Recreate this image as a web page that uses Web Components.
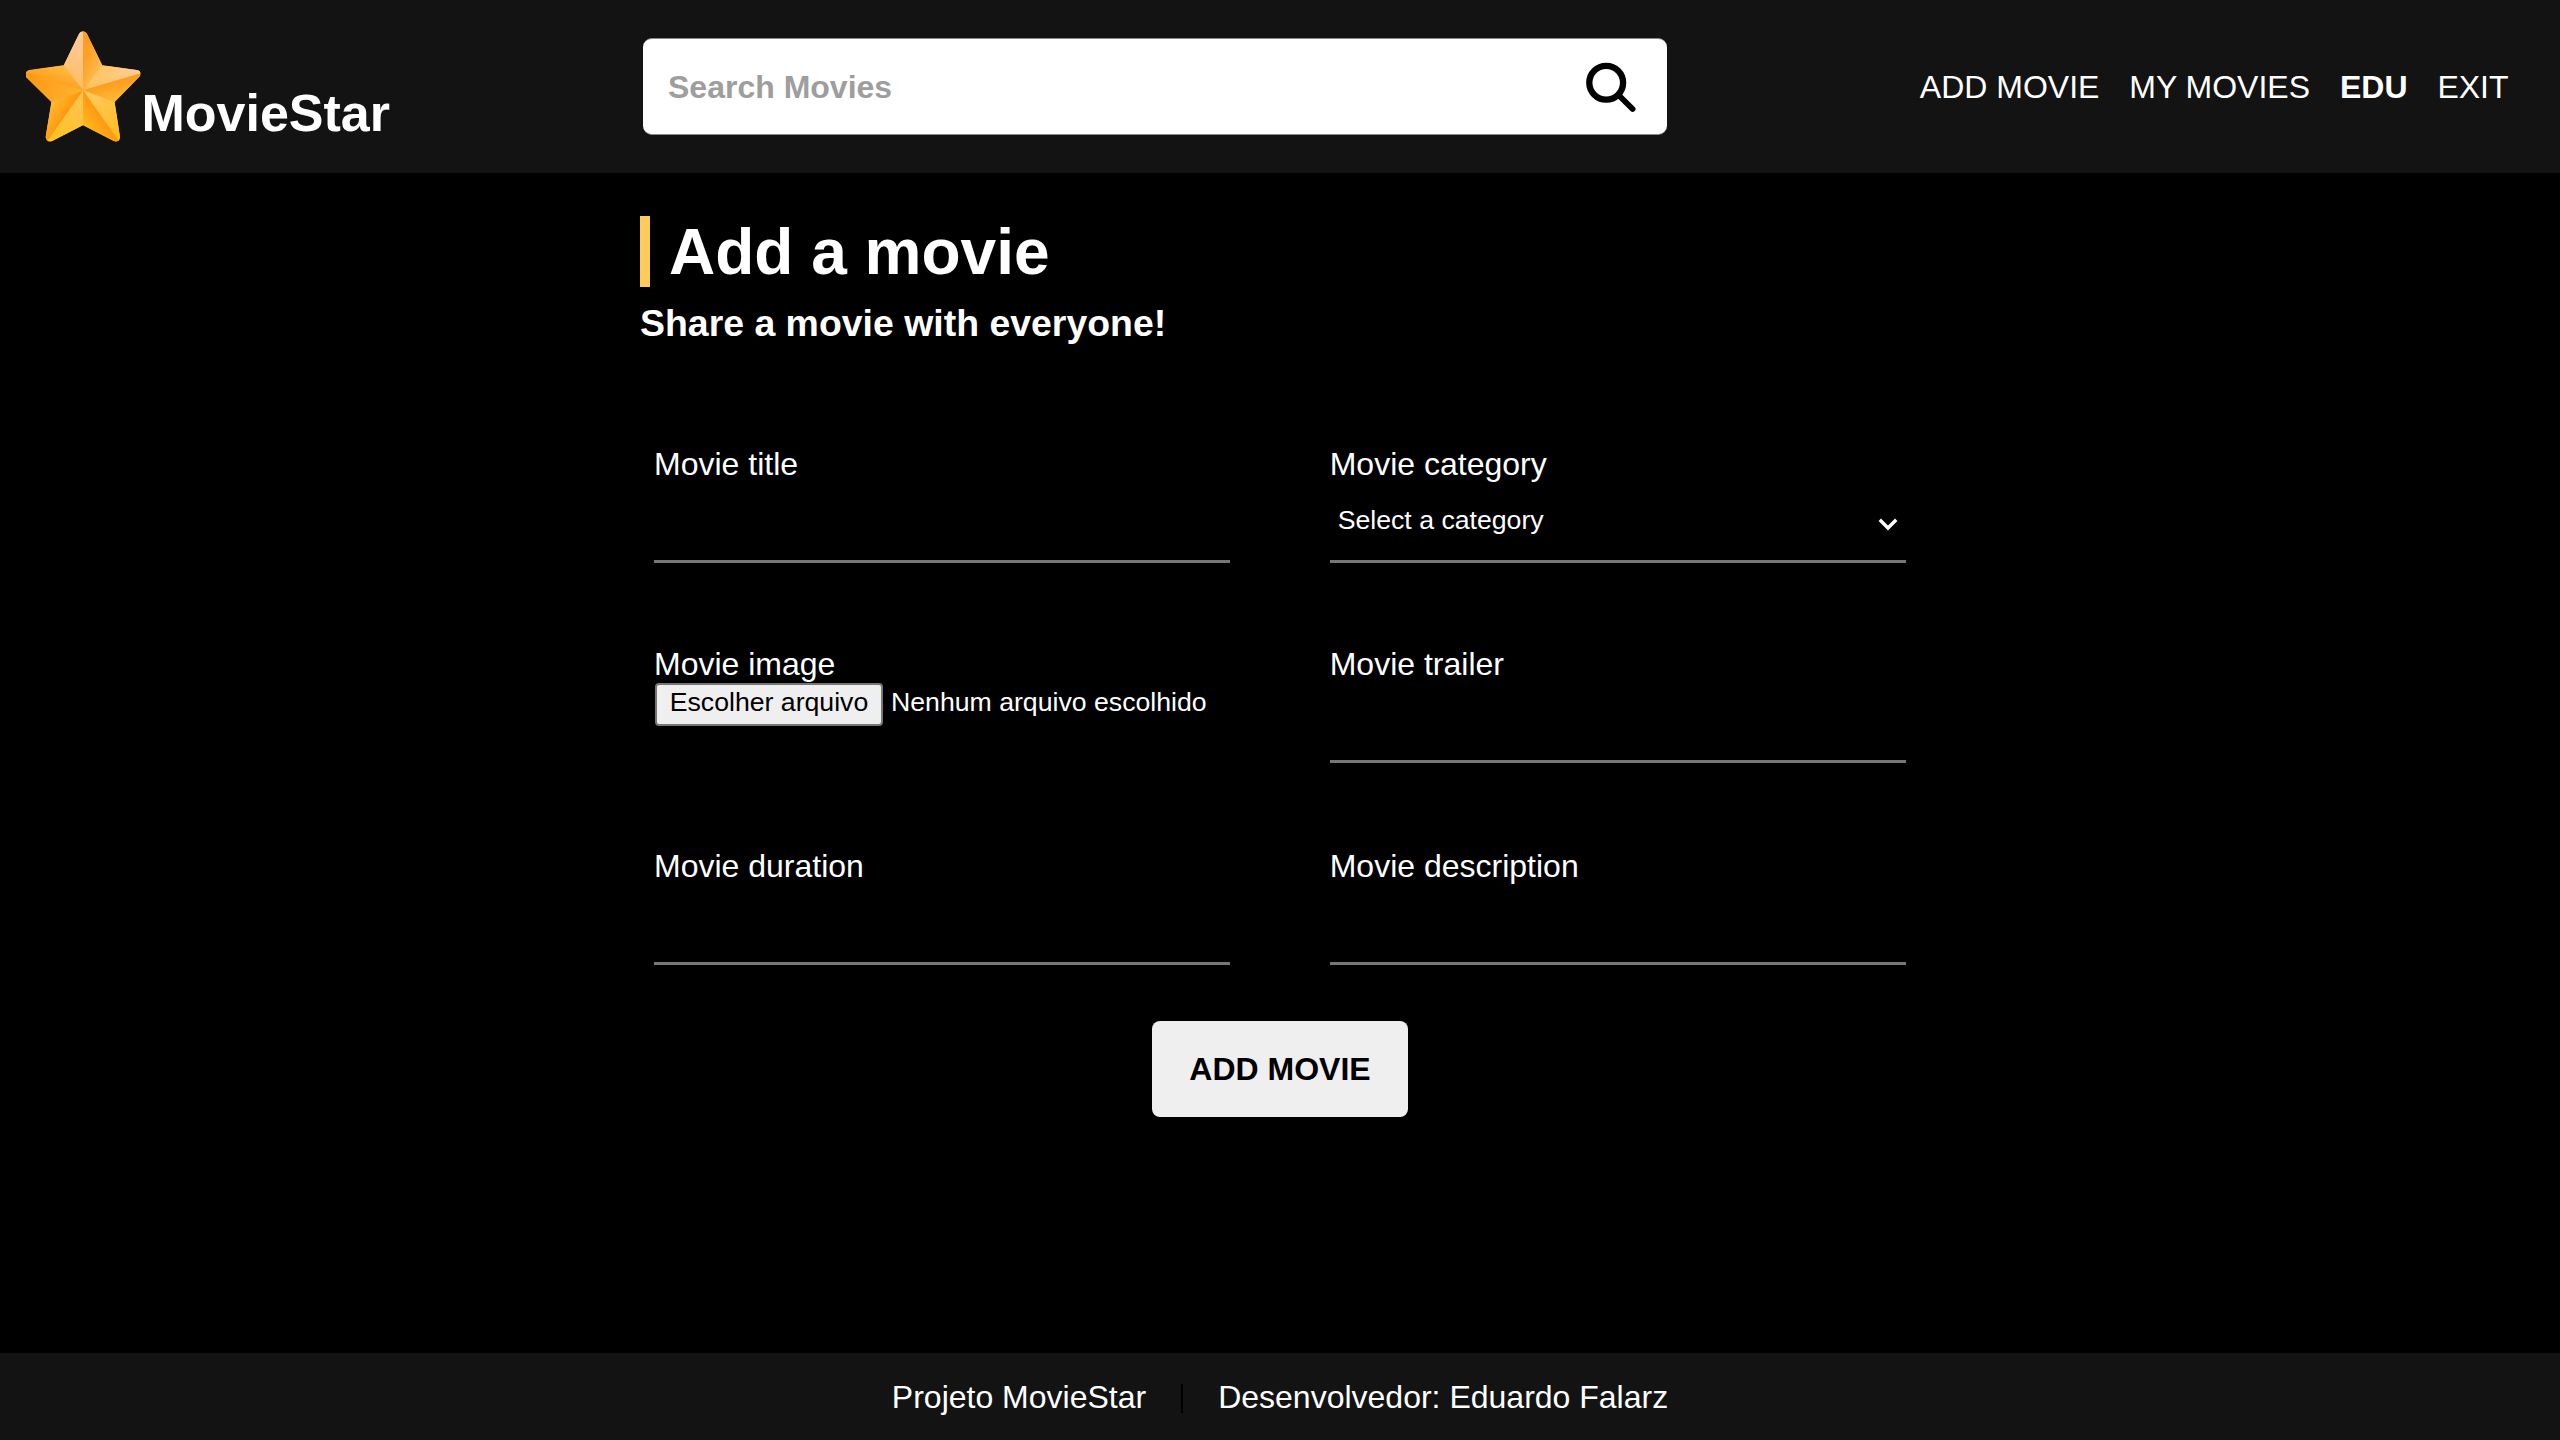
<!DOCTYPE html>
<html lang="en">
<head>
<meta charset="utf-8">
<title>MovieStar</title>
<style>
  html, body { margin: 0; background: #000; }
  body { font: 32px/36px "Liberation Sans", Arial, sans-serif; color: #fff; }
</style>
</head>
<body>
<movie-app></movie-app>
<script>
const define = (name, html) => {
  const t = document.createElement('template');
  t.innerHTML = html;
  customElements.define(name, class extends HTMLElement {
    constructor() {
      super();
      this.attachShadow({ mode: 'open' }).appendChild(t.content.cloneNode(true));
    }
  });
};

define('star-logo', `
<style>
  :host { display: flex; align-items: flex-start; height: 111px; }
  svg { display: block; width: 116px; height: 112px; flex: none; }
  span { font-weight: bold; font-size: 52px; line-height: 58px; margin: 53px 0 0 -0.5px; }
</style>
<svg viewBox="79 92 348 336">
  <defs>
    <clipPath id="s"><path d="M239 99Q250 87 261 99L308 195L411 209Q427 212 421 227L345 305L361 410Q359 427 344 423L250 375L156 423Q141 427 138 410L155 305L79 230Q74 213 89 209L192 195Z"/></clipPath>
    <linearGradient id="a" x1="0" y1="0" x2="0" y2="1"><stop offset="0" stop-color="#ffcda5"/><stop offset="1" stop-color="#ffbd60"/></linearGradient>
    <linearGradient id="b" gradientUnits="userSpaceOnUse" x1="250" y1="180" x2="300" y2="200"><stop offset="0" stop-color="#ff9d26"/><stop offset="1" stop-color="#ffbc4a"/></linearGradient>
    <linearGradient id="c" gradientUnits="userSpaceOnUse" x1="420" y1="210" x2="260" y2="260"><stop offset="0" stop-color="#ffce9c"/><stop offset=".5" stop-color="#ffc873"/><stop offset="1" stop-color="#ffc35c"/></linearGradient>
    <linearGradient id="d" gradientUnits="userSpaceOnUse" x1="335" y1="244" x2="350" y2="300"><stop offset="0" stop-color="#ff9b1e"/><stop offset="1" stop-color="#ffb932"/></linearGradient>
    <linearGradient id="e" gradientUnits="userSpaceOnUse" x1="270" y1="280" x2="355" y2="415"><stop offset="0" stop-color="#ffc95c"/><stop offset="1" stop-color="#ffbb20"/></linearGradient>
    <linearGradient id="f" gradientUnits="userSpaceOnUse" x1="304" y1="345" x2="260" y2="376"><stop offset="0" stop-color="#ff980f"/><stop offset="1" stop-color="#ffb520"/></linearGradient>
    <linearGradient id="g" gradientUnits="userSpaceOnUse" x1="250" y1="280" x2="165" y2="415"><stop offset="0" stop-color="#ffc255"/><stop offset="1" stop-color="#ffc323"/></linearGradient>
    <linearGradient id="h" gradientUnits="userSpaceOnUse" x1="198" y1="345" x2="153" y2="316"><stop offset="0" stop-color="#ff980f"/><stop offset="1" stop-color="#ffba30"/></linearGradient>
    <linearGradient id="i" gradientUnits="userSpaceOnUse" x1="95" y1="240" x2="240" y2="280"><stop offset="0" stop-color="#ff9a16"/><stop offset="1" stop-color="#ffb230"/></linearGradient>
    <linearGradient id="j" gradientUnits="userSpaceOnUse" x1="155" y1="243" x2="170" y2="200"><stop offset="0" stop-color="#ffa01f"/><stop offset="1" stop-color="#ffb83a"/></linearGradient>
  </defs>
  <g clip-path="url(#s)">
    <rect x="70" y="80" width="360" height="350" fill="#ffb02c"/>
    <path fill="url(#a)" d="M250 270V70L192 195Z"/><path fill="url(#b)" d="M250 270V70L308 195Z"/>
    <path fill="url(#c)" d="M250 270L308 195L440 205V214Z"/><path fill="url(#d)" d="M250 270L440 214L345 305Z"/>
    <path fill="url(#e)" d="M250 270L345 305L370 440Z"/><path fill="url(#f)" d="M250 270L370 440L250 375Z"/>
    <path fill="url(#g)" d="M250 270V375L130 440Z"/><path fill="url(#h)" d="M250 270L130 440L155 305Z"/>
    <path fill="url(#i)" d="M250 270L155 305L60 214Z"/><path fill="url(#j)" d="M250 270L60 214L192 195Z"/>
  </g>
</svg>
<span><slot></slot></span>`);

define('search-box', `
<style>
  :host { display: flex; align-items: center; justify-content: space-between; box-sizing: border-box;
    width: 1024px; height: 97px; padding: 0 30.5px 0 25px; background: #fff; border: 1px solid #8a8a8a; border-width: 1px 0; border-radius: 9px;
    color: #9e9e9e; font-weight: bold; }
  span { padding-top: 1px; }
  svg { display: block; width: 52px; height: 52px; }
</style>
<span><slot></slot></span>
<svg viewBox="0 0 52 52" fill="none" stroke="#000" stroke-width="6.3"><circle cx="21.2" cy="21.7" r="16.9"/><path d="M33.5 34L47.6 48" stroke-linecap="round" stroke-width="5.8"/></svg>`);

define('nav-links', `
<style>
  :host { display: flex; gap: 29.9px; white-space: nowrap; padding-top: 2px; }
</style><slot></slot>`);

define('top-bar', `
<style>
  :host { display: grid; grid-template-columns: 617px 1fr auto; height: 173px; box-sizing: border-box; background: #131313; padding: 0 51.5px 0 26px; }
  .logo { padding-top: 31px; }
  .search { padding-top: 38px; }
  .nav { padding-top: 67px; }
</style>
<div class="logo"><slot name="logo"></slot></div>
<div class="search"><slot name="search"></slot></div>
<div class="nav"><slot name="nav"></slot></div>`);

define('page-heading', `
<style>
  :host { display: block; padding-top: 43px; }
  h1 { margin: 0; height: 70.7px; font-size: 64px; line-height: 72px; border-left: 10px solid #ffcb5a; padding-left: 19px; }
  h3 { margin: 15.3px 0 0; font-size: 37.44px; line-height: 42px; }
</style>
<h1><slot></slot></h1>
<h3><slot name="sub"></slot></h3>`);

define('form-field', `
<style>
  :host { display: block; height: 117px; box-sizing: border-box; border-bottom: 3px solid #767676; }
  :host([plain]) { border-color: transparent; }
  .control { font-size: 26.667px; line-height: 30px; }
</style>
<div><slot name="label"></slot></div>
<div class="control"><slot></slot></div>`);

define('select-control', `
<style>
  :host { display: flex; justify-content: space-between; padding: 23px 8px 0 8px; }
  svg { display: block; width: 20px; height: 13px; margin-top: 13px; }
</style>
<span><slot></slot></span>
<svg viewBox="0 0 20 13" fill="none" stroke="#fff" stroke-width="3.4"><path d="M1.8 1.8L10 10L18.2 1.8"/></svg>`);

define('file-control', `
<style>
  :host { display: flex; align-items: flex-start; gap: 8px; padding: 1.5px 0 0 1px; white-space: nowrap; }
  .btn { box-sizing: border-box; width: 228px; height: 42.5px; border: 2px solid #767676; border-radius: 4px; background: #efefef; color: #000; text-align: center; line-height: 30px; padding-top: 2px; }
  .name { padding-top: 4px; }
</style>
<div class="btn"><slot name="button"></slot></div>
<div class="name"><slot></slot></div>`);

define('action-button', `
<style>
  :host { display: flex; align-items: center; justify-content: center; width: 256px; height: 96px; box-sizing: border-box; background: #efefef; color: #000; border-radius: 8px; font-weight: bold; }
</style><slot></slot>`);

define('page-footer', `
<style>
  :host { display: flex; justify-content: center; align-items: center; gap: 35px; height: 86.7px; box-sizing: border-box; background: #131313; }
  i { width: 2px; height: 29px; margin-top: 4px; background: #000; }
</style>
<slot name="project"></slot><i></i><slot name="author"></slot>`);

define('movie-app', `
<style>
  :host { display: flex; flex-direction: column; width: 2560px; height: 1440px; overflow: hidden; background: #000; }
  main { flex: 1; padding-left: 640px; width: 1280px; }
  .grid { display: grid; grid-template-columns: 576.4px 576.4px; grid-template-rows: 200px 202px 117px; column-gap: 99.3px; align-items: start; margin: 102px 0 0 14px; }
  action-button { margin: 56px auto 0 512px; }
</style>
<top-bar>
  <star-logo slot="logo">MovieStar</star-logo>
  <search-box slot="search">Search Movies</search-box>
  <nav-links slot="nav"><span>ADD MOVIE</span><span>MY MOVIES</span><b>EDU</b><span>EXIT</span></nav-links>
</top-bar>
<main>
  <page-heading>Add a movie<span slot="sub">Share a movie with everyone!</span></page-heading>
  <div class="grid">
    <form-field><span slot="label">Movie title</span></form-field>
    <form-field><span slot="label">Movie category</span><select-control>Select a category</select-control></form-field>
    <form-field plain><span slot="label">Movie image</span><file-control><span slot="button">Escolher arquivo</span>Nenhum arquivo escolhido</file-control></form-field>
    <form-field><span slot="label">Movie trailer</span></form-field>
    <form-field><span slot="label">Movie duration</span></form-field>
    <form-field><span slot="label">Movie description</span></form-field>
  </div>
  <action-button>ADD MOVIE</action-button>
</main>
<page-footer><span slot="project">Projeto MovieStar</span><span slot="author">Desenvolvedor: Eduardo Falarz</span></page-footer>`);
</script>
</body>
</html>
